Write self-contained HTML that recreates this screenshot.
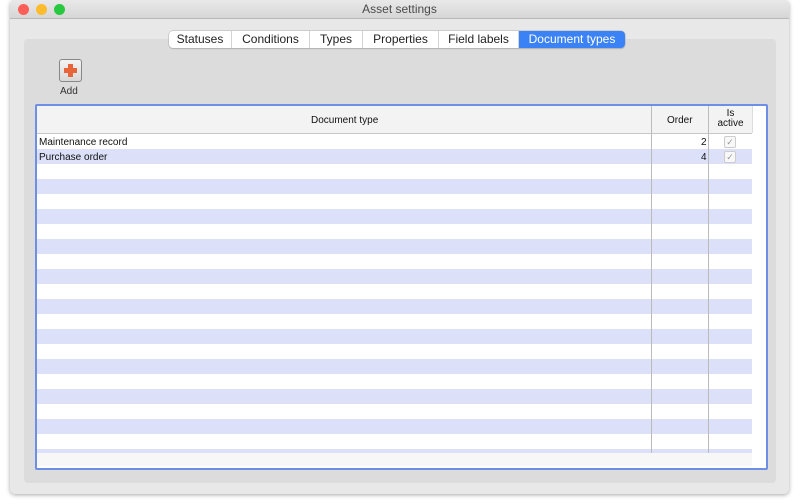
<!DOCTYPE html><html><head><style>
body{margin:0;width:800px;height:504px;background:#fff;font-family:"Liberation Sans",sans-serif;position:relative;overflow:hidden}
.win{position:absolute;left:10px;top:0;width:779px;height:494px;background:#e8e8e8;border-radius:5px;box-shadow:0 1px 4px rgba(0,0,0,.35)}
.tb{position:absolute;left:0;top:0;right:0;height:18px;background:linear-gradient(#e9e9e9,#d6d6d6);border-bottom:1px solid #b8b8b8;border-radius:5px 5px 0 0;text-align:center;font-size:12px;line-height:19px;color:#4a4a4a}
.dot{position:absolute;top:4px;width:11px;height:11px;border-radius:50%}
.panel{position:absolute;left:14px;top:39px;width:752px;height:444px;background:#dcdcdc;border-radius:4px}
.tabs{position:absolute;left:159px;top:31px;height:17px;display:flex;background:#fff;border-radius:4px;box-shadow:0 0 0 0.5px #b0b0b0,0 1px 1px rgba(0,0,0,.2);font-size:12px;line-height:17px;color:#222}
.tabs div{padding:0 0;text-align:center;border-right:1px solid #d4d4d4}
.tabs .a{background:#3b82f6;color:#fff;border-radius:0 4px 4px 0;border:none}
.tbl{position:absolute;left:25px;top:104px;width:729px;height:362px;border:2px solid #6d8fe6;border-radius:2px;background:#fff}
.hd{position:absolute;left:0;top:0;width:715px;height:27px;background:#f3f3f3;border-bottom:1px solid #c8c8c8;font-size:10px;color:#222}
.rows{position:absolute;left:0;top:28px;width:715px;height:319px;background:repeating-linear-gradient(#fff 0 15px,#dce0f9 15px 30px)}
.vl{position:absolute;width:1px;background:#bbb}
.t{position:absolute;font-size:10px;color:#111}
.cb{position:absolute;width:10px;height:10px;border:1px solid #ccc;border-radius:2px;background:#f8f8f8;font-size:9px;line-height:10px;text-align:center;color:#999}
</style></head><body>
<div class="win">
<div class="tb">Asset settings
<span class="dot" style="left:8px;background:#fc5f57"></span><span class="dot" style="left:26px;background:#fdbc2e"></span><span class="dot" style="left:44px;background:#28c840"></span></div>
<div class="panel"></div>
<div class="tabs">
<div style="width:62px">Statuses</div><div style="width:77px">Conditions</div><div style="width:52px">Types</div><div style="width:75px">Properties</div><div style="width:79px">Field labels</div><div class="a" style="width:106px">Document types</div></div>
<div style="position:absolute;left:49px;top:59px;width:21px;height:21px;border:1px solid #888;border-radius:3px;background:linear-gradient(#f4f4f4,#d8d8d8)">
<div style="position:absolute;left:8px;top:4px;width:5px;height:13px;background:#e8643a"></div><div style="position:absolute;left:4px;top:8px;width:13px;height:5px;background:#e8643a"></div></div>
<div class="t" style="left:50px;top:86px;color:#333">Add</div>
<div class="tbl">
<div class="hd"><span class="t" style="left:274px;top:9px">Document type</span><span class="t" style="left:630px;top:9px">Order</span><span class="t" style="left:672px;top:3px;width:43px;text-align:center;line-height:10px">Is<br>active</span></div>
<div class="rows"></div>
<div style="position:absolute;left:0;top:347px;width:715px;height:13px;background:#f7f7f7"></div>
<div class="vl" style="left:614px;top:0;height:347px"></div>
<div class="vl" style="left:671px;top:0;height:347px"></div>
<div class="vl" style="left:715px;top:0;height:27px;background:#ddd"></div>
<span class="t" style="left:2px;top:31px">Maintenance record</span>
<span class="t" style="left:2px;top:46px">Purchase order</span>
<span class="t" style="left:664px;top:31px">2</span>
<span class="t" style="left:664px;top:46px">4</span>
<div class="cb" style="left:687px;top:30px">✓</div>
<div class="cb" style="left:687px;top:45px">✓</div>
</div>
</div>
</body></html>
